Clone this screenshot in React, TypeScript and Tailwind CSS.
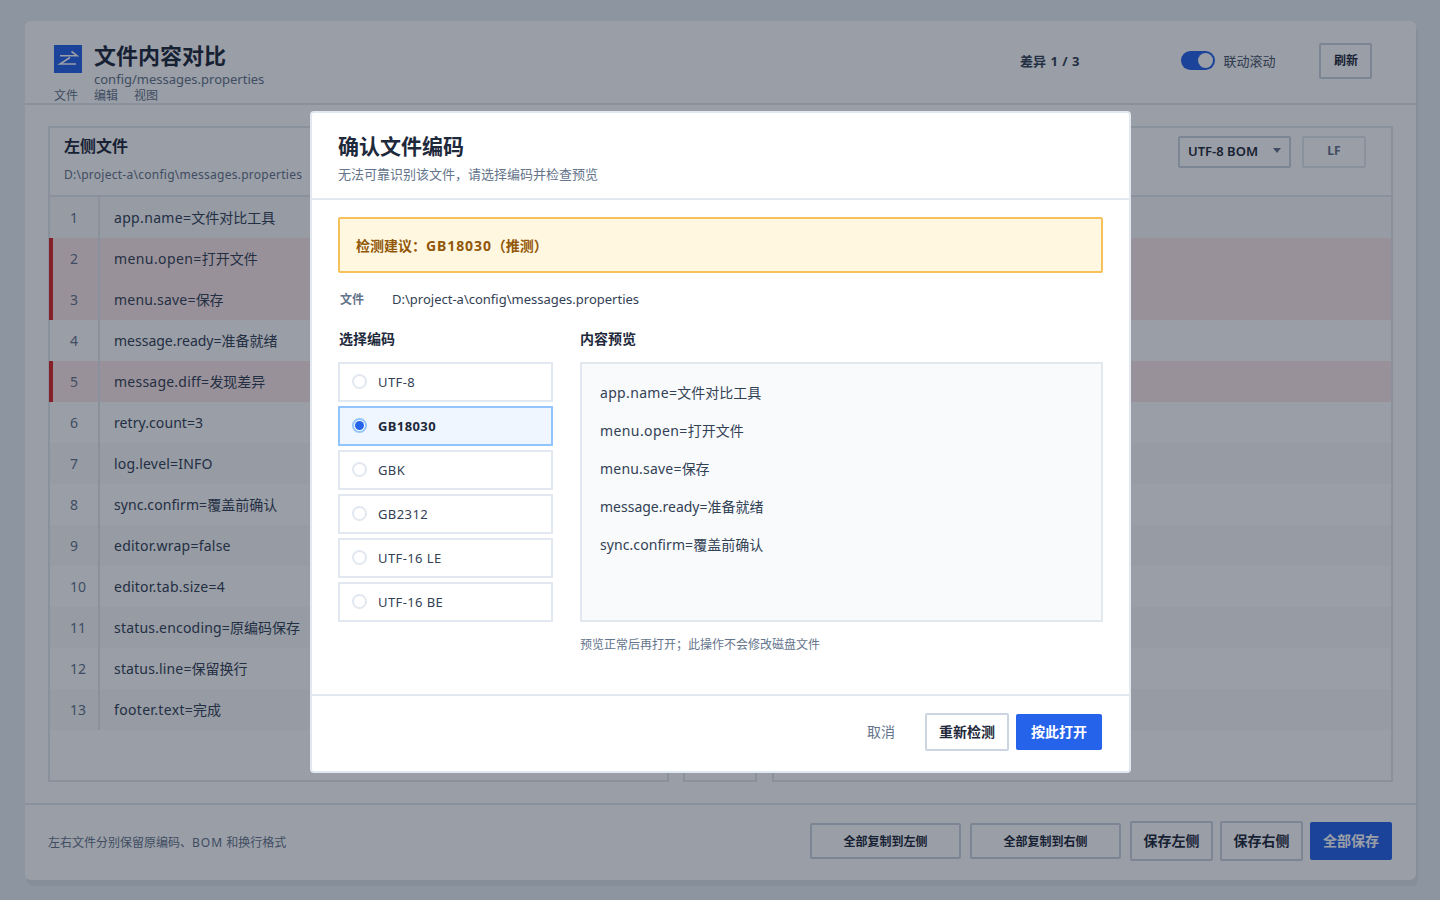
const lines = [
  ["app.name=", "文件对比工具", false, "tracking-[0.33px]"],
  ["menu.open=", "打开文件", true, "tracking-[0.4px]"],
  ["menu.save=", "保存", true, "tracking-[0.2px]"],
  ["message.ready=", "准备就绪", false, "tracking-[0px]"],
  ["message.diff=", "发现差异", true, "tracking-[0.23px]"],
  ["retry.count=3", "", false, "tracking-[0.08px]"],
  ["log.level=INFO", "", false, "tracking-[0.2px]"],
  ["sync.confirm=", "覆盖前确认", false, "tracking-[0.08px]"],
  ["editor.wrap=false", "", false, "tracking-[0.23px]"],
  ["editor.tab.size=4", "", false, "tracking-[0.23px]"],
  ["status.encoding=", "原编码保存", false, "tracking-[0.19px]"],
  ["status.line=", "保留换行", false, "tracking-[0.17px]"],
  ["footer.text=", "完成", false, "tracking-[0.33px]"],
] as const;

const encodings = ["UTF-8", "GB18030", "GBK", "GB2312", "UTF-16 LE", "UTF-16 BE"];
const preview = [lines[0], lines[1], lines[2], lines[3], lines[7]];

function Rows({ numbers }: { numbers: boolean }) {
  return (
    <div className="flex flex-col">
      {lines.map(([key, value, diff, tracking], i) => (
        <div key={i} className={`flex h-[41px] items-center ${diff ? "-ml-px bg-[#fee9e9]" : i % 2 === 0 ? "bg-[#f8fafc]" : ""}`}>
          <div className={`flex h-full shrink-0 items-center border-r-2 border-[#e2e8f0] text-[14px] text-[#64748b] ${diff ? "w-[51px] border-l-4 border-l-[#dc2626] pl-[17px]" : "w-[50px] pl-[20px]"}`}>
            {numbers ? i + 1 : ""}
          </div>
          <div className="whitespace-nowrap pl-[14px] text-[14px] text-[#334155]">
            {numbers && (
              <>
                <span className={tracking}>{key}</span>
                {value}
              </>
            )}
          </div>
        </div>
      ))}
    </div>
  );
}

export default function App() {
  return (
    <div className="relative h-[900px] w-[1440px] overflow-hidden bg-[#e9eff4] pl-[25px] pr-[24px] pt-[21px] font-['Noto_Sans','Noto_Sans_CJK_SC',sans-serif]">
      <div className="flex h-[859px] flex-col rounded-[6px] bg-white shadow-[2px_6px_0_#dde3e9]">
        <header className="flex h-[84px] shrink-0 border-b-2 border-[#e2e8f0] pl-[29px] pr-[42px]">
          <div className="flex w-[400px] shrink-0 flex-col pt-[21px]">
            <div className="flex items-start gap-3">
              <div className="mt-[3px] h-[28px] w-[28px] bg-[#2563eb]">
                <svg width="28" height="28" viewBox="0 0 28 28" fill="none" stroke="#ffffff" strokeWidth="1.6">
                  <path d="M6 10.7H23L17.5 6.5" />
                  <path d="M22 19H6L16 12.5" />
                </svg>
              </div>
              <div className="flex flex-col">
                <div className="text-[22px] font-bold leading-[27px] text-[#1e293b]">文件内容对比</div>
                <div className="mt-[2px] text-[13px] leading-[17px] text-[#64748b]">config/messages.properties</div>
              </div>
            </div>
            <div className="flex gap-[16px] text-[12px] leading-[15px] text-[#64748b]">
              <span>文件</span>
              <span>编辑</span>
              <span>视图</span>
            </div>
          </div>
          <div className="flex flex-1 items-center pb-[1px]">
            <div className="ml-[566px] shrink-0 whitespace-nowrap text-[13px] font-bold text-[#334155] [word-spacing:1px]">差异 1 / 3</div>
            <div className="ml-[102px] flex shrink-0 items-center gap-[8px]">
              <div className="mb-[2px] flex h-[19px] w-[34px] items-center justify-end rounded-full bg-[#2563eb] pr-[2px]">
                <div className="h-[15px] w-[15px] rounded-full bg-white" />
              </div>
              <span className="whitespace-nowrap text-[13px] text-[#475569]">联动滚动</span>
            </div>
            <button className="mb-[2px] ml-[44px] h-[36px] w-[53px] shrink-0 rounded-[2px] border-2 border-[#cbd5e1] bg-white text-[12px] font-bold text-[#1e293b]">刷新</button>
          </div>
        </header>

        <main className="flex min-h-0 flex-1 gap-[14px] px-[23px] pb-[21px] pt-[21px]">
          <section className="flex w-[621px] flex-col border-2 border-[#e2e8f0]">
            <div className="flex h-[69px] shrink-0 flex-col border-b-2 border-[#e2e8f0] pl-[14px] pt-[7px]">
              <div className="text-[16px] font-bold leading-[22px] text-[#1e293b]">左侧文件</div>
              <div className="mt-[9px] whitespace-nowrap text-[12px] leading-[18px] tracking-[0.26px] text-[#64748b]">D:\project-a\config\messages.properties</div>
            </div>
            <Rows numbers />
          </section>
          <section className="mr-px w-[74px] border-2 border-[#e2e8f0]" />
          <section className="flex flex-1 flex-col border-2 border-[#e2e8f0]">
            <div className="flex h-[69px] shrink-0 items-start justify-end gap-[11px] border-b-2 border-[#e2e8f0] pr-[25px] pt-[8px]">
              <div className="flex h-[32px] w-[113px] items-center justify-between rounded-[2px] border-2 border-[#cbd5e1] bg-white pl-[8px] pr-[8px] text-[13px] font-semibold text-[#1e293b]">
                <span>UTF-8 BOM</span>
                <span className="mb-[3px] h-0 w-0 border-x-4 border-t-[5px] border-x-transparent border-t-[#64748b]" />
              </div>
              <div className="flex h-[32px] w-[64px] items-center justify-center rounded-[2px] border-2 border-[#e2e8f0] pb-[2px] text-[12px] font-bold text-[#64748b]">LF</div>
            </div>
            <Rows numbers={false} />
          </section>
        </main>

        <footer className="flex h-[77px] shrink-0 items-center justify-between border-t-2 border-[#e2e8f0] pl-[23px] pr-[24px]">
          <div className="pt-[1px] text-[12px] text-[#64748b]">左右文件分别保留原编码、<span className="tracking-[1px]">BOM</span> 和换行格式</div>
          <div className="flex items-center gap-[7px] pb-[3px]">
            <button className="mr-[2px] h-[36px] w-[151px] rounded-[2px] border-2 border-[#cbd5e1] bg-white pt-px text-[12px] font-bold text-[#1e293b]">全部复制到左侧</button>
            <button className="mr-[2px] h-[36px] w-[151px] rounded-[2px] border-2 border-[#cbd5e1] bg-white pt-px text-[12px] font-bold text-[#1e293b]">全部复制到右侧</button>
            <button className="h-[40px] w-[83px] rounded-[2px] border-2 border-[#cbd5e1] bg-white pb-px text-[14px] font-bold text-[#1e293b]">保存左侧</button>
            <button className="h-[40px] w-[83px] rounded-[2px] border-2 border-[#cbd5e1] bg-white pb-px text-[14px] font-bold text-[#1e293b]">保存右侧</button>
            <button className="h-[38px] w-[82px] rounded-[2px] bg-[#2563eb] pb-px text-[14px] font-bold text-white">全部保存</button>
          </div>
        </footer>
      </div>

      <div className="absolute inset-0 flex bg-[#0f172a]/[0.42] pl-[310px] pt-[111px]">
        <div className="flex h-[662px] w-[821px] flex-col rounded-[4px] border-2 border-[#e2e8f0] bg-white">
          <div className="h-[87px] shrink-0 border-b-2 border-[#e2e8f0] pl-[26px] pt-[18px]">
            <div className="text-[21px] font-bold leading-[30px] text-[#1e293b]">确认文件编码</div>
            <div className="mt-[4px] text-[13px] leading-[18px] text-[#64748b]">无法可靠识别该文件，请选择编码并检查预览</div>
          </div>
          <div className="flex-1 px-[26px] pt-[17px]">
            <div className="flex h-[56px] items-center rounded-[2px] border-2 border-[#f6c15b] bg-[#fff7e0] pl-[16px] text-[14px] font-bold text-[#92580a]">
              检测建议：<span className="tracking-[0.9px]">GB18030</span>（推测）
            </div>
            <div className="mt-[18px] flex items-center pl-[2px] leading-[18px]">
              <span className="w-[52px] text-[12px] font-bold text-[#64748b]">文件</span>
              <span className="-mt-[2px] text-[13px] text-[#334155]">D:\project-a\config\messages.properties</span>
            </div>
            <div className="mt-[20px] flex gap-[27px]">
              <div className="w-[215px]">
                <div className="mb-[13px] pl-[1px] text-[14px] font-bold leading-[20px] text-[#1e293b]">选择编码</div>
                <div className="flex flex-col gap-[4px]">
                  {encodings.map((e) => {
                    const on = e === "GB18030";
                    return (
                      <div key={e} className={`flex h-[40px] items-center gap-[11px] border-2 pl-[12px] text-[13px] tracking-[0.4px] ${on ? "border-[#93c5fd] bg-[#eff6ff] font-bold text-[#1e293b]" : "border-[#e2e8f0] bg-white text-[#334155]"}`}>
                        <span className={`mb-[1px] flex h-[15px] w-[15px] items-center justify-center rounded-full border-2 bg-white ${on ? "border-[#93c5fd]" : "border-[#e2e8f0]"}`}>
                          {on && <span className="h-[9px] w-[9px] shrink-0 rounded-full bg-[#2563eb]" />}
                        </span>
                        <span className="pt-[1px]">{e}</span>
                      </div>
                    );
                  })}
                </div>
              </div>
              <div className="w-[523px]">
                <div className="mb-[13px] text-[14px] font-bold leading-[20px] text-[#1e293b]">内容预览</div>
                <div className="flex h-[260px] flex-col border-2 border-[#e2e8f0] bg-[#f8fafc] pl-[18px] pt-[11px]">
                  {preview.map(([key, value, , tracking]) => (
                    <div key={key} className="h-[38px] text-[14px] leading-[36px] text-[#334155]">
                      <span className={tracking}>{key}</span>
                      {value}
                    </div>
                  ))}
                </div>
                <div className="mt-[14px] text-[12px] leading-[18px] text-[#64748b]">预览正常后再打开；此操作不会修改磁盘文件</div>
              </div>
            </div>
          </div>
          <div className="flex h-[77px] shrink-0 items-center justify-end border-t-2 border-[#e2e8f0] pb-[4px] pr-[27px]">
            <button className="mr-[30px] text-[14px] text-[#64748b]">取消</button>
            <button className="mr-[7px] h-[38px] w-[84px] rounded-[2px] border-2 border-[#cbd5e1] bg-white text-[14px] font-bold text-[#1e293b]">重新检测</button>
            <button className="h-[36px] w-[86px] rounded-[2px] bg-[#2563eb] text-[14px] font-bold text-white">按此打开</button>
          </div>
        </div>
      </div>
    </div>
  );
}
